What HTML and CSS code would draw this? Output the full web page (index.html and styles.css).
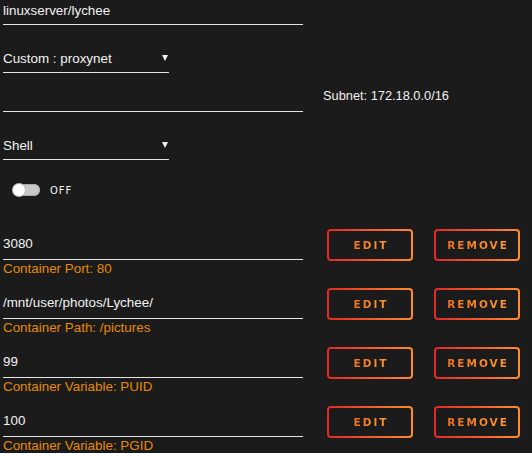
FILE: index.html
```html
<!DOCTYPE html>
<html>
<head>
<meta charset="utf-8">
<link rel="stylesheet" href="styles.css">
</head>
<body>
<div class="page">
  <div class="field wide first">linuxserver/lychee</div>

  <div class="field narrow select gap-a">Custom : proxynet<span class="arrow"></span></div>

  <div class="subnet-row">
    <div class="field wide empty"></div>
    <div class="subnet">Subnet: 172.18.0.0/16</div>
  </div>

  <div class="field narrow select gap-a">Shell<span class="arrow"></span></div>

  <div class="toggle-row">
    <span class="toggle"><span class="knob"></span></span>
    <span class="toggle-label">OFF</span>
  </div>

  <div class="entries">
    <div class="entry">
      <div class="entry-left">
        <div class="field wide value">3080</div>
        <div class="hint">Container Port: 80</div>
      </div>
      <div class="buttons">
        <button class="btn"><span>EDIT</span></button>
        <button class="btn"><span>REMOVE</span></button>
      </div>
    </div>
    <div class="entry">
      <div class="entry-left">
        <div class="field wide value">/mnt/user/photos/Lychee/</div>
        <div class="hint">Container Path: /pictures</div>
      </div>
      <div class="buttons">
        <button class="btn"><span>EDIT</span></button>
        <button class="btn"><span>REMOVE</span></button>
      </div>
    </div>
    <div class="entry">
      <div class="entry-left">
        <div class="field wide value">99</div>
        <div class="hint">Container Variable: PUID</div>
      </div>
      <div class="buttons">
        <button class="btn"><span>EDIT</span></button>
        <button class="btn"><span>REMOVE</span></button>
      </div>
    </div>
    <div class="entry">
      <div class="entry-left">
        <div class="field wide value">100</div>
        <div class="hint">Container Variable: PGID</div>
      </div>
      <div class="buttons">
        <button class="btn"><span>EDIT</span></button>
        <button class="btn"><span>REMOVE</span></button>
      </div>
    </div>
  </div>
</div>
</body>
</html>
```

FILE: styles.css
```css
html, body {
  margin: 0;
  padding: 0;
  background: #1b1b1b;
  height: 100%;
  overflow: hidden;
}
body {
  font-family: "Liberation Sans", Arial, sans-serif;
  font-size: 13.4px;
  color: #f2f2f2;
}
.page {
  padding-left: 3px;
}
.field {
  box-sizing: border-box;
  border-bottom: 1px solid #e4e4e4;
  height: 25px;
  line-height: 22px;
  position: relative;
}
.wide { width: 300px; }
.narrow { width: 166px; }
.first {
  height: 25px;
  line-height: 22px;
}
.gap-a { margin-top: 23px; }
.select { height: 25px; line-height: 21px; }
.arrow {
  position: absolute;
  right: 1px;
  top: 7px;
  width: 0;
  height: 0;
  border-left: 3px solid transparent;
  border-right: 3px solid transparent;
  border-top: 6px solid #f2f2f2;
}
.subnet-row {
  display: flex;
  align-items: flex-start;
  margin-top: 14px;
}
.empty { height: 25px; }
.subnet {
  margin-left: 20px;
  margin-top: 2px;
  line-height: 14px;
  font-size: 12.8px;
}
.toggle-row {
  display: flex;
  align-items: center;
  margin-top: 23px;
  margin-left: 10px;
  height: 14px;
}
.toggle {
  display: inline-block;
  width: 27px;
  height: 12px;
  border-radius: 6px;
  background: #c8c8c8;
  position: relative;
  box-shadow: inset 0 0 0 1px #a8a8a8;
}
.knob {
  position: absolute;
  left: 0;
  top: 0;
  width: 12px;
  height: 12px;
  border-radius: 6px;
  background: #fff;
  box-shadow: 0 0 0 1px #bbb;
}
.toggle-label {
  margin-left: 10px;
  font-size: 10px;
  letter-spacing: 1px;
  font-family: "DejaVu Sans", sans-serif;
}
.entries {
  margin-top: 32px;
}
.entry {
  display: flex;
  height: 59px;
}
.entry-left {
  width: 300px;
}
.value {
  height: 31px;
  line-height: 29px;
}
.hint {
  color: #e68a00;
  line-height: 16px;
  margin-top: 1px;
}
.buttons {
  display: flex;
  gap: 21px;
  margin-left: 24px;
}
.btn {
  box-sizing: border-box;
  width: 86px;
  height: 32px;
  padding: 0;
  border: 2px solid transparent;
  border-radius: 4px;
  background: linear-gradient(#1b1b1b, #1b1b1b) padding-box,
              linear-gradient(90deg, #e22828, #ff8c2f) border-box;
  font-family: "DejaVu Sans", sans-serif;
  font-weight: bold;
  font-size: 10.5px;
  letter-spacing: 2px;
}
.btn span {
  padding-left: 2px;
  background: linear-gradient(90deg, #f0711c, #ff9a33);
  -webkit-background-clip: text;
  background-clip: text;
  color: transparent;
}
```
